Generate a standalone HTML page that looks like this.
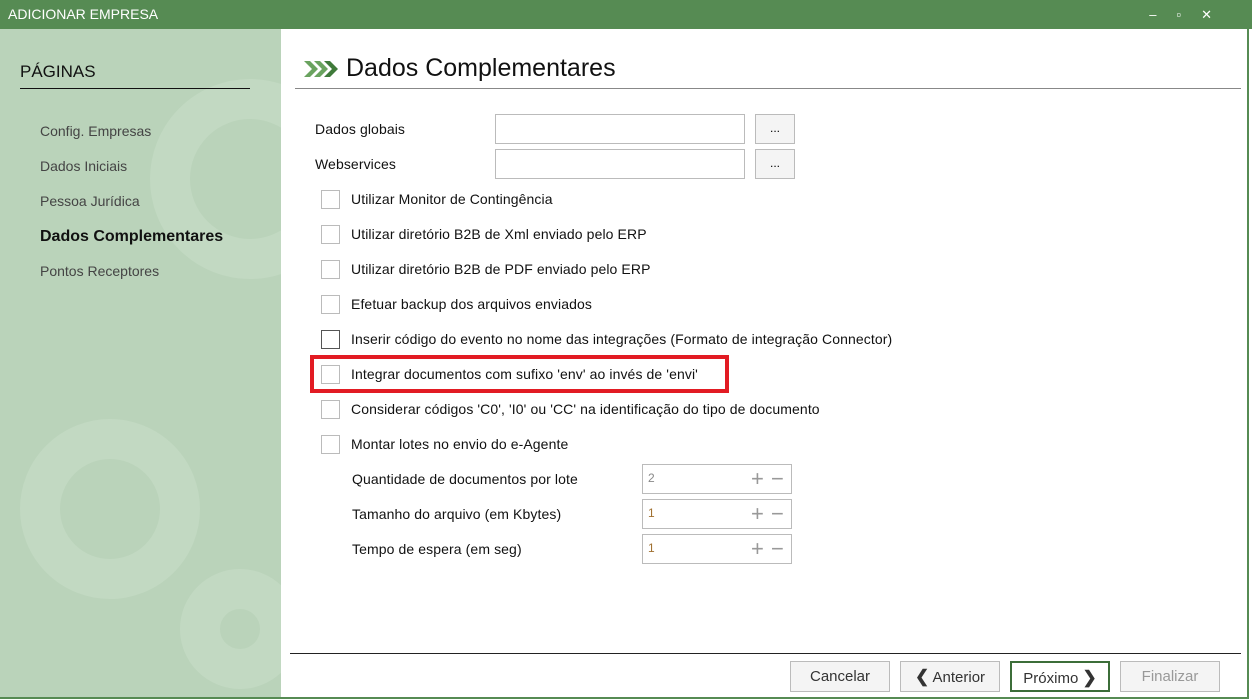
<!DOCTYPE html>
<html><head><style>
*{margin:0;padding:0;box-sizing:border-box}
body{width:1252px;height:699px;overflow:hidden;font-family:"Liberation Sans",sans-serif;background:#fff;position:relative}
.title{position:absolute;left:0;top:0;width:1252px;height:29px;background:#568b53;color:#fff;font-size:14px;line-height:29px;padding-left:8px}
.side{position:absolute;left:0;top:29px;width:281px;height:670px;background:#bad3ba;overflow:hidden}
.main{position:absolute;left:281px;top:29px;width:966px;height:668px;background:#fff}
.rb{position:absolute;left:1247px;top:29px;width:2px;height:670px;background:#568b53}
.bb{position:absolute;left:0;top:697px;width:1249px;height:2px;background:#568b53}
.a{position:absolute;white-space:nowrap}
.lbl{font-size:14px;color:#111;letter-spacing:0.1px}
.cb{position:absolute;width:19px;height:19px;border:1px solid #bbb;background:#fff}
.inp{position:absolute;border:1px solid #bbb;background:#fff}
.btn{position:absolute;top:661px;height:31px;width:100px;border:1px solid #bbb;background:#f4f4f4;font-size:15px;color:#333;text-align:center;line-height:29px}
.nav{font-size:14px;color:#444;left:40px}
.pm{position:absolute;color:#999;font-size:22px;line-height:28px}
</style></head><body>
<div class="title">ADICIONAR EMPRESA</div>
<div style="position:absolute;right:20px;top:0;color:#fff;font-size:13px;line-height:29px;letter-spacing:20px">–▫✕</div>
<div class="side">
<svg width="281" height="670" style="position:absolute;left:0;top:0">
<g fill="none" stroke="#c2d9c2" stroke-width="40">
<circle cx="250" cy="150" r="80"/><circle cx="110" cy="480" r="70"/><circle cx="240" cy="600" r="40"/>
</g>
</svg>
<div class="a" style="left:20px;top:33px;font-size:17px;color:#111">PÁGINAS</div>
<div style="position:absolute;left:20px;top:59px;width:230px;height:1px;background:#111"></div>
<div class="a nav" style="top:94px">Config. Empresas</div>
<div class="a nav" style="top:129px">Dados Iniciais</div>
<div class="a nav" style="top:164px">Pessoa Jurídica</div>
<div class="a" style="left:40px;top:199px;font-size:16px;font-weight:bold;color:#111">Dados Complementares</div>
<div class="a nav" style="top:234px">Pontos Receptores</div>
</div>
<div class="main"></div>
<svg style="position:absolute;left:304px;top:61px" width="36" height="16" viewBox="0 0 36 16">
<g fill="#6aa35f"><path d="M0 0h6l8 8-8 8H0l8-8z"/><path d="M10 0h6l8 8-8 8h-6l8-8z"/><path d="M20 0h6l8 8-8 8h-6l8-8z" fill="#3f7a3a"/></g>
</svg>
<div class="a" style="left:346px;top:54px;font-size:25px;color:#111">Dados Complementares</div>
<div style="position:absolute;left:295px;top:88px;width:946px;height:1px;background:#888"></div>
<div class="a lbl" style="left:315px;top:121px">Dados globais</div>
<div class="inp" style="left:495px;top:114px;width:250px;height:30px"></div>
<div class="inp" style="left:755px;top:114px;width:40px;height:30px;background:#f4f4f4;text-align:center;font-size:12px;line-height:26px">...</div>
<div class="a lbl" style="left:315px;top:156px">Webservices</div>
<div class="inp" style="left:495px;top:149px;width:250px;height:30px"></div>
<div class="inp" style="left:755px;top:149px;width:40px;height:30px;background:#f4f4f4;text-align:center;font-size:12px;line-height:26px">...</div>

<div class="cb" style="left:321px;top:190px"></div><div class="a lbl" style="left:351px;top:191px">Utilizar Monitor de Contingência</div>
<div class="cb" style="left:321px;top:225px"></div><div class="a lbl" style="left:351px;top:226px">Utilizar diretório B2B de Xml enviado pelo ERP</div>
<div class="cb" style="left:321px;top:260px"></div><div class="a lbl" style="left:351px;top:261px">Utilizar diretório B2B de PDF enviado pelo ERP</div>
<div class="cb" style="left:321px;top:295px"></div><div class="a lbl" style="left:351px;top:296px">Efetuar backup dos arquivos enviados</div>
<div class="cb" style="left:321px;top:330px;border-color:#555"></div><div class="a lbl" style="left:351px;top:331px">Inserir código do evento no nome das integrações (Formato de integração Connector)</div>
<div style="position:absolute;left:310px;top:355px;width:419px;height:38px;border:4px solid #e21b23"></div>
<div class="cb" style="left:321px;top:365px"></div><div class="a lbl" style="left:351px;top:366px">Integrar documentos com sufixo 'env' ao invés de 'envi'</div>
<div class="cb" style="left:321px;top:400px"></div><div class="a lbl" style="left:351px;top:401px">Considerar códigos 'C0', 'I0' ou 'CC' na identificação do tipo de documento</div>
<div class="cb" style="left:321px;top:435px"></div><div class="a lbl" style="left:351px;top:436px">Montar lotes no envio do e-Agente</div>

<div class="a lbl" style="left:352px;top:471px">Quantidade de documentos por lote</div>
<div class="inp" style="left:642px;top:464px;width:150px;height:30px"><span style="position:absolute;left:5px;top:6px;font-size:12px;color:#888">2</span><span class="pm" style="left:108px">+</span><span class="pm" style="left:128px">−</span></div>
<div class="a lbl" style="left:352px;top:506px">Tamanho do arquivo (em Kbytes)</div>
<div class="inp" style="left:642px;top:499px;width:150px;height:30px"><span style="position:absolute;left:5px;top:6px;font-size:12px;color:#a07030">1</span><span class="pm" style="left:108px">+</span><span class="pm" style="left:128px">−</span></div>
<div class="a lbl" style="left:352px;top:541px">Tempo de espera (em seg)</div>
<div class="inp" style="left:642px;top:534px;width:150px;height:30px"><span style="position:absolute;left:5px;top:6px;font-size:12px;color:#a07030">1</span><span class="pm" style="left:108px">+</span><span class="pm" style="left:128px">−</span></div>

<div style="position:absolute;left:290px;top:653px;width:951px;height:1px;background:#222"></div>
<div class="btn" style="left:790px">Cancelar</div>
<div class="btn" style="left:900px"><b style="font-size:17px">❮</b> Anterior</div>
<div class="btn" style="left:1010px;border:2px solid #3c6e39;background:#fff">Próximo <b style="font-size:17px">❯</b></div>
<div class="btn" style="left:1120px;color:#999">Finalizar</div>
<div class="rb"></div><div class="bb"></div>
</body></html>
